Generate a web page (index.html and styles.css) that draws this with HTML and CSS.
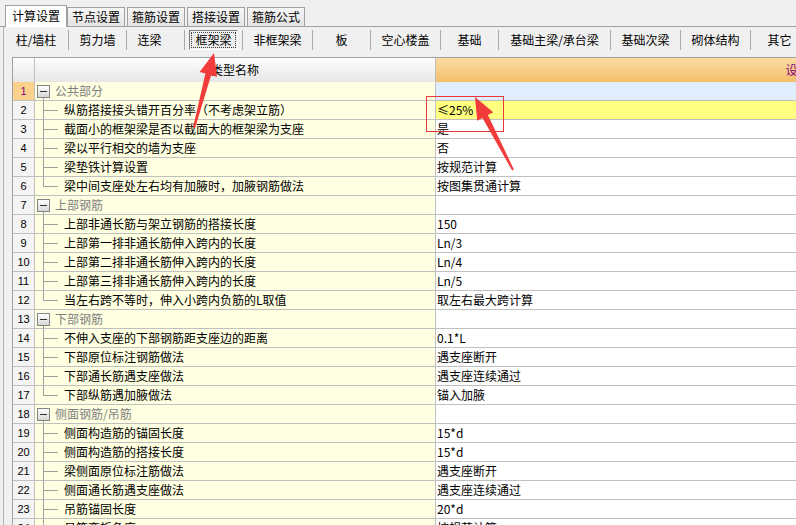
FILE: index.html
```html
<!DOCTYPE html>
<html lang="zh-CN">
<head>
    <meta charset="UTF-8">
    <meta name="viewport" content="width=device-width, initial-scale=1.0">
    <title>计算设置</title>
    <link rel="stylesheet" href="styles.css">
</head>
<body>
    <div class="tabs">
        <div class="tab active">计算设置</div>
        <div class="tab">节点设置</div>
        <div class="tab">箍筋设置</div>
        <div class="tab">搭接设置</div>
        <div class="tab">箍筋公式</div>
    </div>

    <div class="panel">
        <div class="toolbar">
            <div class="tool first">柱/墙柱</div>
            <div class="tool">剪力墙</div>
            <div class="tool shift">连梁</div>
            <div class="tool"><span class="pressed">框架梁</span></div>
            <div class="tool four">非框架梁</div>
            <div class="tool">板</div>
            <div class="tool four">空心楼盖</div>
            <div class="tool">基础</div>
            <div class="tool long">基础主梁/承台梁</div>
            <div class="tool four">基础次梁</div>
            <div class="tool four">砌体结构</div>
            <div class="tool">其它</div>
        </div>

        <div class="grid">
            <div class="row head">
                <div class="num"></div>
                <div class="name">类型名称</div>
                <div class="val">设置值</div>
            </div>
            <div class="row current">
                <div class="num">1</div>
                <div class="name group"><span class="fold"></span>公共部分</div>
                <div class="val"></div>
            </div>
            <div class="row marked">
                <div class="num">2</div>
                <div class="name leaf">纵筋搭接接头错开百分率（不考虑架立筋）</div>
                <div class="val">≤25%</div>
            </div>
            <div class="row">
                <div class="num">3</div>
                <div class="name leaf">截面小的框架梁是否以截面大的框架梁为支座</div>
                <div class="val">是</div>
            </div>
            <div class="row">
                <div class="num">4</div>
                <div class="name leaf">梁以平行相交的墙为支座</div>
                <div class="val">否</div>
            </div>
            <div class="row">
                <div class="num">5</div>
                <div class="name leaf">梁垫铁计算设置</div>
                <div class="val">按规范计算</div>
            </div>
            <div class="row">
                <div class="num">6</div>
                <div class="name leaf last">梁中间支座处左右均有加腋时，加腋钢筋做法</div>
                <div class="val">按图集贯通计算</div>
            </div>
            <div class="row">
                <div class="num">7</div>
                <div class="name group"><span class="fold"></span>上部钢筋</div>
                <div class="val"></div>
            </div>
            <div class="row">
                <div class="num">8</div>
                <div class="name leaf">上部非通长筋与架立钢筋的搭接长度</div>
                <div class="val">150</div>
            </div>
            <div class="row">
                <div class="num">9</div>
                <div class="name leaf">上部第一排非通长筋伸入跨内的长度</div>
                <div class="val">Ln/3</div>
            </div>
            <div class="row">
                <div class="num">10</div>
                <div class="name leaf">上部第二排非通长筋伸入跨内的长度</div>
                <div class="val">Ln/4</div>
            </div>
            <div class="row">
                <div class="num">11</div>
                <div class="name leaf">上部第三排非通长筋伸入跨内的长度</div>
                <div class="val">Ln/5</div>
            </div>
            <div class="row">
                <div class="num">12</div>
                <div class="name leaf last">当左右跨不等时，伸入小跨内负筋的L取值</div>
                <div class="val">取左右最大跨计算</div>
            </div>
            <div class="row">
                <div class="num">13</div>
                <div class="name group"><span class="fold"></span>下部钢筋</div>
                <div class="val"></div>
            </div>
            <div class="row">
                <div class="num">14</div>
                <div class="name leaf">不伸入支座的下部钢筋距支座边的距离</div>
                <div class="val">0.1*L</div>
            </div>
            <div class="row">
                <div class="num">15</div>
                <div class="name leaf">下部原位标注钢筋做法</div>
                <div class="val">遇支座断开</div>
            </div>
            <div class="row">
                <div class="num">16</div>
                <div class="name leaf">下部通长筋遇支座做法</div>
                <div class="val">遇支座连续通过</div>
            </div>
            <div class="row">
                <div class="num">17</div>
                <div class="name leaf last">下部纵筋遇加腋做法</div>
                <div class="val">锚入加腋</div>
            </div>
            <div class="row">
                <div class="num">18</div>
                <div class="name group"><span class="fold"></span>侧面钢筋/吊筋</div>
                <div class="val"></div>
            </div>
            <div class="row">
                <div class="num">19</div>
                <div class="name leaf">侧面构造筋的锚固长度</div>
                <div class="val">15*d</div>
            </div>
            <div class="row">
                <div class="num">20</div>
                <div class="name leaf">侧面构造筋的搭接长度</div>
                <div class="val">15*d</div>
            </div>
            <div class="row">
                <div class="num">21</div>
                <div class="name leaf">梁侧面原位标注筋做法</div>
                <div class="val">遇支座断开</div>
            </div>
            <div class="row">
                <div class="num">22</div>
                <div class="name leaf">侧面通长筋遇支座做法</div>
                <div class="val">遇支座连续通过</div>
            </div>
            <div class="row">
                <div class="num">23</div>
                <div class="name leaf">吊筋锚固长度</div>
                <div class="val">20*d</div>
            </div>
            <div class="row">
                <div class="num">24</div>
                <div class="name leaf">吊筋弯折角度</div>
                <div class="val">按规范计算</div>
            </div>
        </div>
    </div>

    <!-- annotation marks drawn over the screenshot -->
    <svg class="marks" width="796" height="525" viewBox="0 0 796 525">
        <polygon fill="#f23b3b" points="214,53 217,77 211.2,75.1 195,128.3 193,127.7 205.4,73.5 199.6,72"/>
        <rect x="426.5" y="96.5" width="77" height="35" fill="none" stroke="#e8383a" stroke-width="1"/>
        <polygon fill="#f23b3b" points="475,97 493.2,112.3 487.9,115.1 513.9,169.5 512.1,170.5 482.5,117.9 477.2,120.7"/>
    </svg>
</body>
</html>
```

FILE: styles.css
```css
body {
    margin: 0;
    width: 796px;
    height: 525px;
    overflow: hidden;
    background: #f0f0f0;
    font-family: "Noto Sans CJK SC", sans-serif;
    font-size: 12px;
    color: #000;
}

/* tab strip */
.tabs {
    display: flex;
    align-items: flex-end;
    height: 27px;
    box-sizing: border-box;
    padding-left: 5px;
    border-bottom: 1px solid #a0a0a0;
}

.tab {
    height: 18px;
    line-height: 18px;
    padding: 0 4px;
    margin-right: 2px;
    border: 1px solid #a0a0a0;
    border-bottom: none;
    background: linear-gradient(#f6f6f6, #e4e4e4);
}

.tab.active {
    height: 21px;
    line-height: 20px;
    padding: 0 6px;
    margin-right: 0;
    margin-bottom: -1px;
    background: #fff;
}

/* page body */
.panel {
    margin-left: 3px;
    border-left: 1px solid #b4b4b4;
    overflow: hidden;
}

.toolbar {
    display: flex;
    height: 30px;
    box-sizing: border-box;
    padding-top: 3px;
}

.tool {
    flex: none;
    width: 57px;
    height: 20px;
    line-height: 20px;
    text-align: center;
    white-space: nowrap;
    border-right: 1px solid #a8a8a8;
}

.tool.first { width: 64px; }
.tool.four { width: 69px; }
.tool.long { width: 111px; }
.tool.shift { box-sizing: border-box; width: 58px; padding-right: 12px; }

.pressed {
    display: block;
    margin: 0 4px;
    height: 20px;
    line-height: 18px;
    box-sizing: border-box;
    border: 1px solid;
    border-color: #808080 #fff #fff #808080;
    background: repeating-conic-gradient(#fdfdfd 0 25%, #e2e2e2 0 50%) 0 0 / 2px 2px;
    outline: 1px dotted #404040;
    outline-offset: -3px;
}

/* settings grid */
.grid {
    margin-left: 8px;
    width: 1158px;
    border-left: 1px solid #a0a0a0;
    border-top: 1px solid #a0a0a0;
}

.row {
    display: grid;
    grid-template-columns: 22px 401px 734px;
    height: 19px;
    box-sizing: border-box;
    border-bottom: 1px solid #c0c0c0;
    line-height: 18px;
}

.row > div {
    box-sizing: border-box;
    white-space: nowrap;
    overflow: hidden;
}

.num {
    border-right: 1px solid #c0c0c0;
    background: #f4f4f4;
    text-align: center;
    font-family: "Liberation Sans", sans-serif;
    font-size: 11px;
}

.name {
    display: flex;
    align-items: center;
    border-right: 1px solid #c0c0c0;
    background: #ffffe1;
}

.val {
    padding-left: 1px;
    background: #fff;
}

.head {
    height: 24px;
    border-bottom: none;
    line-height: 24px;
}

.head .num,
.head .name {
    background: linear-gradient(#fdfdfd, #e6e6e6);
}

.head .name {
    justify-content: center;
}

.head .val {
    text-align: center;
    color: #800080;
    background: linear-gradient(#fcdca4, #f3bf69);
}

.current .num {
    background: #fcd18b;
    color: #800080;
}

.current .val {
    background: #dfedfd;
}

.marked .val {
    background: #ffff80;
}

/* tree connectors */
.leaf {
    padding-left: 29px;
    background:
        linear-gradient(#a0a0a0, #a0a0a0) 8px 0 / 1px 100% no-repeat,
        linear-gradient(#a0a0a0, #a0a0a0) 8px 9px / 15px 1px no-repeat,
        #ffffe1;
}

.leaf.last {
    background:
        linear-gradient(#a0a0a0, #a0a0a0) 8px 0 / 1px 10px no-repeat,
        linear-gradient(#a0a0a0, #a0a0a0) 8px 9px / 15px 1px no-repeat,
        #ffffe1;
}

.group {
    padding-left: 2px;
    color: #808080;
    background:
        linear-gradient(#a0a0a0, #a0a0a0) 8px 100% / 1px 3px no-repeat,
        #ffffe1;
}

.fold {
    flex: none;
    width: 11px;
    height: 11px;
    margin-right: 5px;
    border: 1px solid #848484;
    background:
        linear-gradient(#303030, #303030) center / 7px 1px no-repeat,
        linear-gradient(#fff, #d6d6d6);
}

.marks {
    position: absolute;
    left: 0;
    top: 0;
    pointer-events: none;
}
```
